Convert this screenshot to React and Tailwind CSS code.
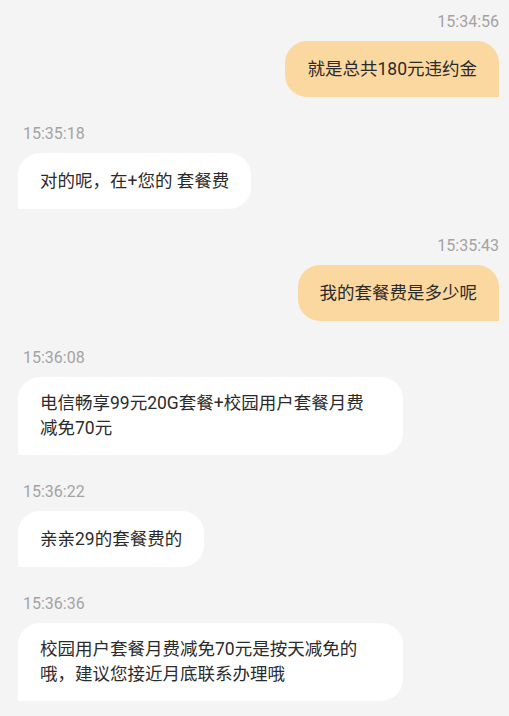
const messages = [
  { time: '15:34:56', mine: true, text: '就是总共180元违约金' },
  { time: '15:35:18', mine: false, text: '对的呢，在+您的 套餐费' },
  { time: '15:35:43', mine: true, text: '我的套餐费是多少呢' },
  { time: '15:36:08', mine: false, wide: true, text: '电信畅享99元20G套餐+校园用户套餐月费减免70元' },
  { time: '15:36:22', mine: false, text: '亲亲29的套餐费的' },
  { time: '15:36:36', mine: false, wide: true, text: '校园用户套餐月费减免70元是按天减免的哦，建议您接近月底联系办理哦' },
];

const Message = ({ time, mine, wide, text }) => {
  let bubble = 'flex items-center min-h-[56px] px-[22px] py-[14px] rounded-[22px] text-[17.5px] leading-[25px] text-[#2b2b2b]';
  if (mine) bubble += ' bg-[#fbd8a0] rounded-br-none max-w-[385px]';
  else bubble += ' bg-white rounded-bl-none';
  if (wide) bubble += ' w-[385px]';

  return (
    <div className={mine ? 'flex flex-col items-end pr-[10px]' : 'flex flex-col items-start pl-[18px]'}>
      <div className={mine ? 'h-[20px] text-[16px] leading-[20px] text-[#a3a3a3] mb-[9px]' : 'h-[20px] pl-[5px] text-[16px] leading-[20px] text-[#a3a3a3] mb-[9px]'}>
        {time}
      </div>
      <div className={bubble}>
        <p className={wide ? 'max-w-[333px]' : ''}>{text}</p>
      </div>
    </div>
  );
};

export default function App() {
  return (
    <div
      className="w-[509px] h-[716px] overflow-hidden bg-[#f4f4f4] pt-[12px] flex flex-col gap-[27px]"
      style={{ fontFamily: 'Roboto, "Noto Sans CJK SC", sans-serif' }}
    >
      {messages.map((m) => (
        <Message key={m.time} {...m} />
      ))}
    </div>
  );
}
